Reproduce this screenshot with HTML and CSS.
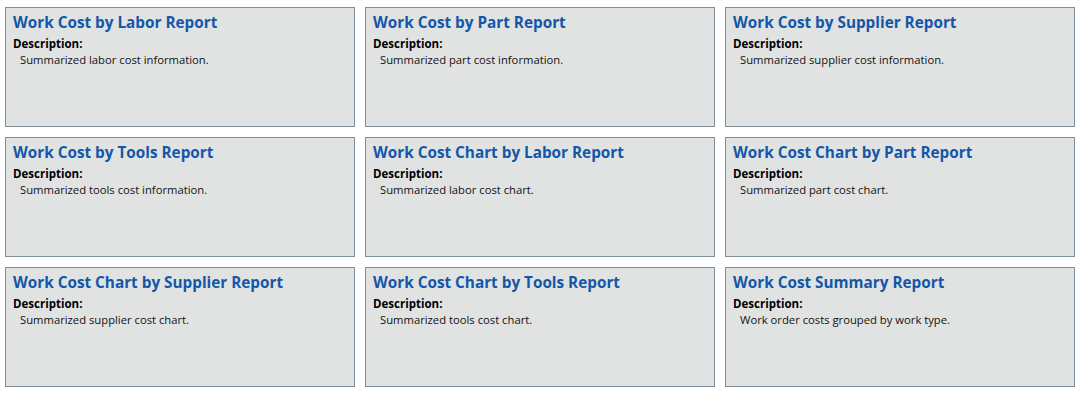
FILE: index.html
```html
<!DOCTYPE html>
<html lang="en">
<head>
    <meta charset="UTF-8">
    <title>Work Cost Reports</title>
    <link rel="stylesheet" href="styles.css">
</head>
<body>
    <div class="report-grid">
        <div class="report-card">
            <div class="report-title">Work Cost by Labor Report</div>
            <div class="report-label">Description:</div>
            <div class="report-desc">Summarized labor cost information.</div>
        </div>
        <div class="report-card">
            <div class="report-title">Work Cost by Part Report</div>
            <div class="report-label">Description:</div>
            <div class="report-desc">Summarized part cost information.</div>
        </div>
        <div class="report-card">
            <div class="report-title">Work Cost by Supplier Report</div>
            <div class="report-label">Description:</div>
            <div class="report-desc">Summarized supplier cost information.</div>
        </div>
        <div class="report-card">
            <div class="report-title">Work Cost by Tools Report</div>
            <div class="report-label">Description:</div>
            <div class="report-desc">Summarized tools cost information.</div>
        </div>
        <div class="report-card">
            <div class="report-title">Work Cost Chart by Labor Report</div>
            <div class="report-label">Description:</div>
            <div class="report-desc">Summarized labor cost chart.</div>
        </div>
        <div class="report-card">
            <div class="report-title">Work Cost Chart by Part Report</div>
            <div class="report-label">Description:</div>
            <div class="report-desc">Summarized part cost chart.</div>
        </div>
        <div class="report-card">
            <div class="report-title">Work Cost Chart by Supplier Report</div>
            <div class="report-label">Description:</div>
            <div class="report-desc">Summarized supplier cost chart.</div>
        </div>
        <div class="report-card">
            <div class="report-title">Work Cost Chart by Tools Report</div>
            <div class="report-label">Description:</div>
            <div class="report-desc">Summarized tools cost chart.</div>
        </div>
        <div class="report-card">
            <div class="report-title">Work Cost Summary Report</div>
            <div class="report-label">Description:</div>
            <div class="report-desc">Work order costs grouped by work type.</div>
        </div>
    </div>
</body>
</html>
```

FILE: styles.css
```css
body {
    margin: 0;
    padding: 7px 9px 0 5px;
    background-color: #fff;
    font-family: "Open Sans", "Noto Sans", sans-serif;
}
.report-grid {
    display: grid;
    grid-template-columns: repeat(3, 350px);
    grid-auto-rows: 120px;
    gap: 10px;
}
.report-card {
    box-sizing: border-box;
    padding: 4px 7px;
    border: 1px solid #7f8e99;
    background-color: #e1e3e3;
}
.report-title {
    color: #1456a8;
    font-size: 15.3px;
    font-weight: bold;
    line-height: 20px;
    margin-bottom: 4px;
}
.report-label {
    color: #000;
    font-size: 11.5px;
    font-weight: bold;
    line-height: 15px;
}
.report-desc {
    color: #111;
    font-size: 11.25px;
    line-height: 17px;
    padding-left: 7px;
}
```
